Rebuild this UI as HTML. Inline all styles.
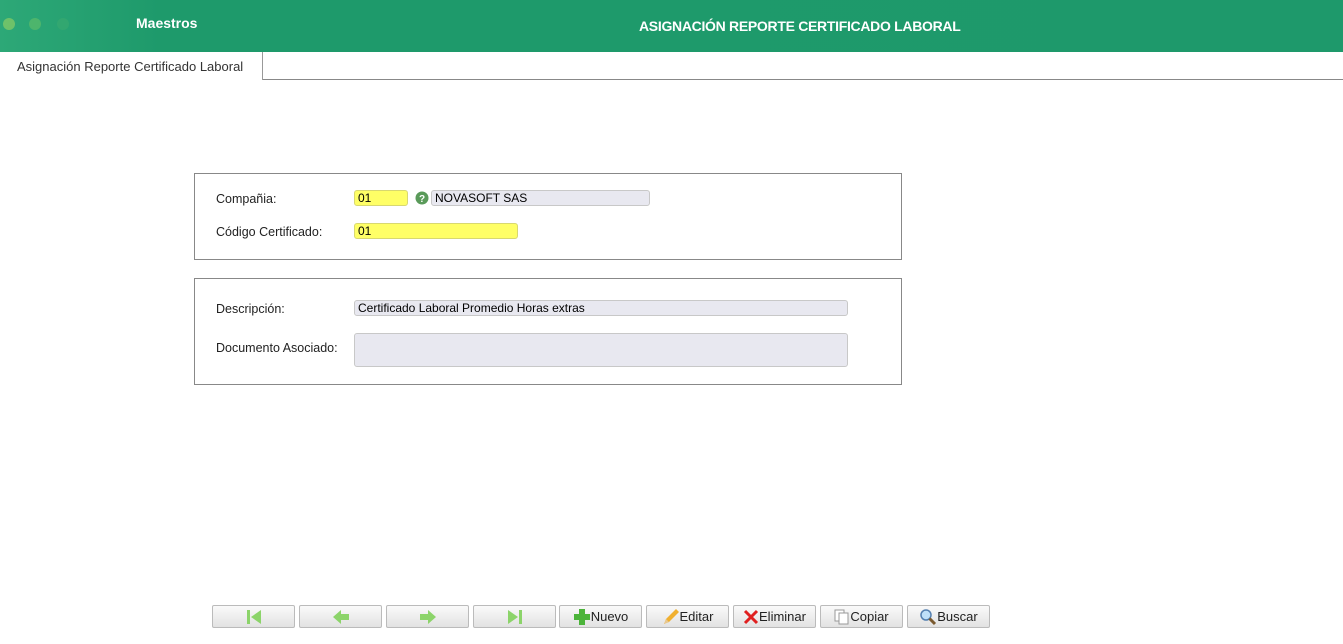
<!DOCTYPE html>
<html><head><meta charset="utf-8"><style>
body{margin:0;width:1343px;height:644px;background:#fff;font-family:"Liberation Sans",Arial,sans-serif;position:relative;overflow:hidden}
.hdr{position:absolute;left:0;top:0;width:1343px;height:52px;background:linear-gradient(90deg,#2da877 0,#1e9a6b 160px,#1e996b 100%)}
.dot{position:absolute;top:18px;width:12px;height:12px;border-radius:50%}
.t1{position:absolute;left:136px;top:15px;color:#fff;font-weight:bold;font-size:14px}
.t2{position:absolute;left:639px;top:18px;color:#fff;font-weight:bold;font-size:14px;letter-spacing:-0.3px}
.tab{position:absolute;left:0;top:52px;width:262px;height:28px;border-right:1px solid #999;background:#fff;font-size:13px;color:#333}
.tab span{position:absolute;left:17px;top:7px}
.line{position:absolute;left:263px;top:79px;width:1080px;border-top:1px solid #888}
.box{position:absolute;left:194px;border:1px solid #888;width:706px}
.lbl{position:absolute;font-size:12.5px;color:#222}
.in{position:absolute;height:14px;border:1px solid #c8c8c8;border-radius:3px;font-size:12px;line-height:14px;padding-left:3px;box-sizing:content-box;color:#000}
.y{background:#ffff66;border-color:#d8d870}
.g{background:#e8e8f0}
.btn{position:absolute;top:605px;width:83px;height:23px;border:1px solid #bbb;border-radius:2px;background:linear-gradient(#fafafa,#e2e2e2);font-size:13px;color:#222;display:flex;align-items:center;justify-content:center;box-sizing:border-box}
</style></head><body>
<div class="hdr">
<div class="dot" style="left:3px;background:#7fc867;opacity:.8"></div>
<div class="dot" style="left:29px;background:#5cbc6a;opacity:.7"></div>
<div class="dot" style="left:57px;background:#3aaa70;opacity:.6"></div>
<div class="t1">Maestros</div>
<div class="t2">ASIGNACIÓN REPORTE CERTIFICADO LABORAL</div>
</div>
<div class="tab"><span>Asignación Reporte Certificado Laboral</span></div>
<div class="line"></div>

<div class="box" style="top:173px;height:85px">
<div class="lbl" style="left:21px;top:18px">Compañia:</div>
<div class="lbl" style="left:21px;top:51px">Código Certificado:</div>
</div>
<div class="in y" style="left:354px;top:190px;width:49px">01</div>
<svg style="position:absolute;left:415px;top:191px" width="14" height="14"><circle cx="7" cy="7" r="6.5" fill="#5a9a5a"/><text x="7" y="11" font-size="10" font-weight="bold" fill="#fff" text-anchor="middle" font-family="Liberation Sans">?</text></svg>
<div class="in g" style="left:431px;top:190px;width:214px">NOVASOFT SAS</div>
<div class="in y" style="left:354px;top:223px;width:159px">01</div>

<div class="box" style="top:278px;height:105px">
<div class="lbl" style="left:21px;top:23px">Descripción:</div>
<div class="lbl" style="left:21px;top:62px">Documento Asociado:</div>
</div>
<div class="in g" style="left:354px;top:300px;width:489px">Certificado Laboral Promedio Horas extras</div>
<div class="in g" style="left:354px;top:333px;width:489px;height:32px"></div>

<div class="btn" style="left:212px"><svg width="16" height="16"><rect x="1" y="1" width="3" height="14" fill="#8cd46a"/><path d="M15 1 L5 8 L15 15Z" fill="#8cd46a"/></svg></div>
<div class="btn" style="left:299px"><svg width="18" height="16"><path d="M1 8 L9 1 V5 H17 V11 H9 V15Z" fill="#8cd46a"/></svg></div>
<div class="btn" style="left:386px"><svg width="18" height="16"><path d="M17 8 L9 1 V5 H1 V11 H9 V15Z" fill="#8cd46a"/></svg></div>
<div class="btn" style="left:473px"><svg width="16" height="16"><rect x="12" y="1" width="3" height="14" fill="#8cd46a"/><path d="M1 1 L11 8 L1 15Z" fill="#8cd46a"/></svg></div>
<div class="btn" style="left:559px"><svg width="18" height="18"><path d="M6 1h6v5h5v6h-5v5H6v-5H1V6h5z" fill="#4cb43a"/></svg>Nuevo</div>
<div class="btn" style="left:646px"><svg width="18" height="18"><path d="M2 16 L4 11 L14 1 L17 4 L7 14Z" fill="#f0b030"/><path d="M2 16 L4 11 L7 14Z" fill="#e8c890"/></svg>Editar</div>
<div class="btn" style="left:733px"><svg width="16" height="16"><path d="M2 2 L14 14 M14 2 L2 14" stroke="#e02020" stroke-width="3"/></svg>Eliminar</div>
<div class="btn" style="left:820px"><svg width="16" height="16"><rect x="1" y="1" width="9" height="11" fill="#fff" stroke="#999"/><rect x="5" y="4" width="9" height="11" fill="#fff" stroke="#999"/></svg>Copiar</div>
<div class="btn" style="left:907px"><svg width="18" height="18"><circle cx="7" cy="7" r="5" fill="#bfe0f8" stroke="#5580b0" stroke-width="1.5"/><path d="M10.5 10.5 L16 16" stroke="#7a5a30" stroke-width="3"/></svg>Buscar</div>
</body></html>
